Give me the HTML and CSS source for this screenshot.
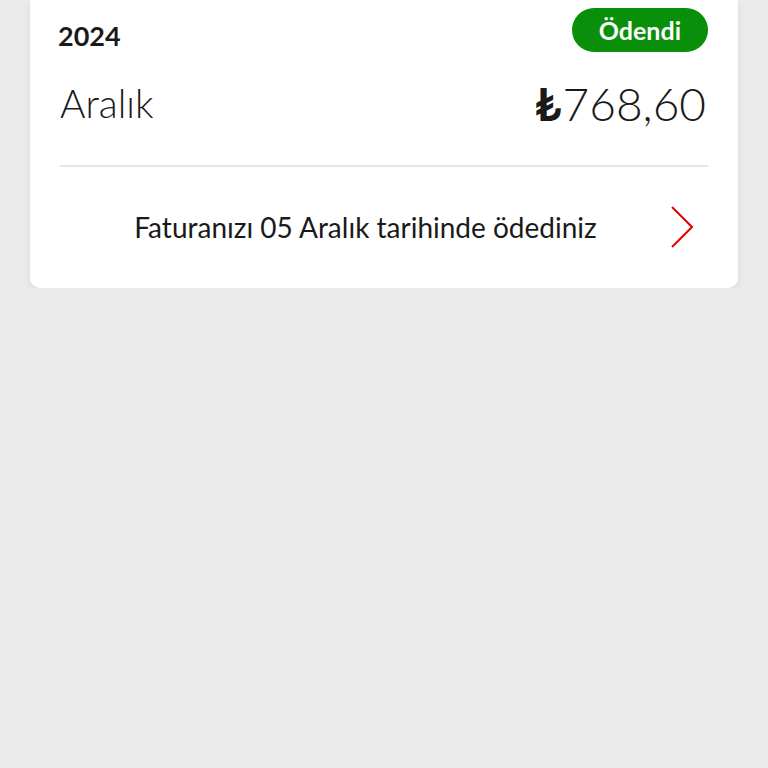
FILE: index.html
```html
<!DOCTYPE html>
<html lang="tr">
<head>
<meta charset="utf-8">
<title>Fatura</title>
<link rel="stylesheet" href="styles.css">
</head>
<body>
<div class="page">
  <div class="card">
    <div class="head">
      <span class="year">2024</span>
      <span class="badge">Ödendi</span>
    </div>
    <div class="main">
      <span class="month">Aralık</span>
      <span class="amount"><span class="cur">₺</span>768,60</span>
    </div>
    <div class="divider"></div>
    <div class="foot">
      <span class="info">Faturanızı 05 Aralık tarihinde ödediniz</span>
      <svg class="chev" width="22" height="42" viewBox="0 0 22 42" aria-hidden="true">
        <polyline points="1,1 21,21 1,41" fill="none" stroke="#e60000" stroke-width="2"/>
      </svg>
    </div>
  </div>
</div>
</body>
</html>
```
FILE: styles.css
```css
html, body {
  margin: 0;
  padding: 0;
  background: #ebebeb;
}
body {
  font-family: Lato, "Open Sans", sans-serif;
  color: #1a1a1a;
}
.page {
  padding: 0 30px;
}
.card {
  background: #fff;
  border-radius: 0 0 10px 10px;
  box-shadow: 0 3px 10px rgba(0,0,0,0.08);
  padding: 8px 30px 0;
}
.head {
  display: flex;
  justify-content: space-between;
  align-items: flex-start;
}
.year {
  font-weight: 700;
  font-size: 27px;
  line-height: 32px;
  margin-top: 12px;
  margin-left: -2px;
}
.badge {
  background: #0a8f0a;
  color: #fff;
  font-weight: 700;
  font-size: 25px;
  line-height: 44px;
  height: 44px;
  padding: 0 27px;
  border-radius: 22px;
}
.main {
  display: flex;
  justify-content: space-between;
  align-items: flex-start;
  height: 52px;
  margin-top: 20px;
}
.month {
  font-weight: 300;
  font-size: 39px;
  line-height: 48px;
  margin-top: 7px;
}
.amount {
  font-weight: 300;
  font-size: 46px;
  line-height: 52px;
  margin-top: 6px;
  margin-right: 2px;
}
.cur {
  font-weight: 700;
  margin-right: 1px;
}
.divider {
  height: 1.5px;
  background: #e4e4e4;
  margin-top: 41px;
}
.foot {
  display: flex;
  align-items: center;
  height: 121px;
}
.info {
  flex: 1;
  text-align: center;
  font-size: 28px;
}
.chev {
  display: block;
  margin-right: 15px;
}
```
